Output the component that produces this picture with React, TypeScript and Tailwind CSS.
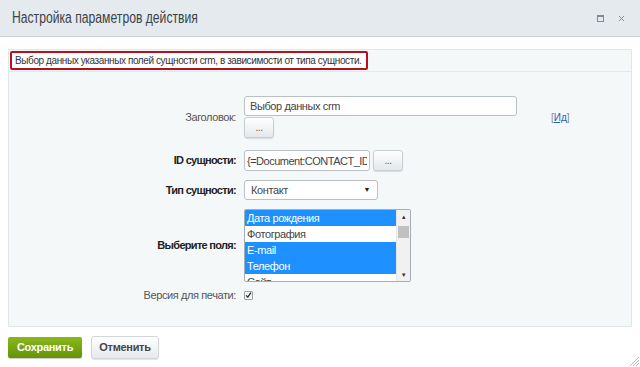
import { X } from "lucide-react"

function DotsButton() {
  return (
    <button className="h-[21px] w-[30px] rounded-[3px] border border-[#c6cdd3] bg-gradient-to-b from-white to-[#e4e8eb] text-[10px] leading-none text-[#555] shadow-[0_1px_1px_rgba(0,0,0,0.12)]">
      ...
    </button>
  )
}

export default function App() {
  const fields = [
    { name: "Дата рождения", selected: true },
    { name: "Фотография", selected: false },
    { name: "E-mail", selected: true },
    { name: "Телефон", selected: true },
    { name: "Сайт", selected: false },
  ]

  return (
    <div className="relative h-[367px] w-[640px] overflow-hidden bg-white font-['Liberation_Sans',Arial,sans-serif] text-[#333]">
      {/* Title bar */}
      <div className="flex h-[37px] items-center justify-between border-b border-[#c9d0d4] bg-[#e4eaed] pl-[12px] pr-[14px]">
        <h1 className="inline-block origin-left scale-x-[0.76] whitespace-nowrap text-[16px] font-normal text-[#3c4349]">
          Настройка параметров действия
        </h1>
        <div className="flex items-center gap-[13px] text-[#7f8a92]">
          <span className="block h-[7px] w-[7px] border border-[#7f8a92] border-t-2"></span>
          <X className="h-[9px] w-[9px]" strokeWidth={2.5} />
        </div>
      </div>

      {/* Body */}
      <div className="px-[8px] pt-[12px]">
        <div className="h-[278px] border border-[#e0e6e9] bg-[#f5f8f9]">
          <div className="flex h-[22px] items-center border-b border-[#e3e8eb] px-[1px]">
            <div className="flex h-[19px] items-center whitespace-nowrap rounded-[2px] border-2 border-[#b3121c] bg-white pl-[3px] pr-[5px] text-[10px] tracking-[-0.4px] text-[#333]">
              Выбор данных указанных полей сущности crm, в зависимости от типа сущности.
            </div>
          </div>

          <div className="flex flex-col pt-[24px] text-[11px] tracking-[-0.4px]">
            {/* Заголовок */}
            <div className="flex items-center">
              <div className="w-[235px] pr-[8px] text-right text-[#555]">Заголовок:</div>
              <div className="flex flex-col gap-[1px]">
                <input
                  readOnly
                  value="Выбор данных crm"
                  className="h-[20px] w-[273px] rounded-[3px] border border-[#b9c0c6] bg-white px-[5px] text-[11px] tracking-[-0.4px] text-[#444] outline-none"
                />
                <DotsButton />
              </div>
              <a className="ml-[34px] text-[10px] tracking-normal text-[#2067b0]">
                <span className="text-[#888]">[</span>
                <span className="underline">Ид</span>
                <span className="text-[#888]">]</span>
              </a>
            </div>

            {/* ID сущности */}
            <div className="mt-[12px] flex items-center">
              <div className="w-[235px] pr-[8px] text-right font-bold tracking-[-0.7px] text-[#222]">ID сущности:</div>
              <input
                readOnly
                value="{=Document:CONTACT_ID}"
                className="h-[21px] w-[126px] rounded-[3px] border border-[#b9c0c6] bg-white px-[2px] text-[11px] tracking-[-0.5px] text-[#444] outline-none"
              />
              <div className="ml-[3px]">
                <DotsButton />
              </div>
            </div>

            {/* Тип сущности */}
            <div className="mt-[9px] flex items-center">
              <div className="w-[235px] pr-[8px] text-right font-bold tracking-[-0.7px] text-[#222]">Тип сущности:</div>
              <div className="flex h-[20px] w-[134px] items-center justify-between rounded-[3px] border border-[#b9c0c6] bg-white pl-[6px] pr-[7px] text-[11px] text-[#444]">
                <span>Контакт</span>
                <span className="text-[7px] text-[#222]">▼</span>
              </div>
            </div>

            {/* Выберите поля */}
            <div className="mt-[9px] flex items-center">
              <div className="w-[235px] pr-[8px] text-right font-bold tracking-[-0.7px] text-[#222]">Выберите поля:</div>
              <div className="flex h-[73px] w-[167px] overflow-hidden rounded-[2px] border border-[#a6adb3] bg-white">
                <div className="flex-1 overflow-hidden text-[11px]">
                  {fields.map((f) => (
                    <div
                      key={f.name}
                      className={
                        f.selected
                          ? "h-[16px] bg-[#1e90ff] pl-[2px] leading-[16px] text-white"
                          : "h-[16px] pl-[2px] leading-[16px] text-[#444]"
                      }
                    >
                      {f.name}
                    </div>
                  ))}
                </div>
                <div className="flex w-[14px] flex-col items-center border-l border-[#e6e6e6] bg-[#f1f1f1]">
                  <span className="mt-[4px] text-[6px] leading-none text-[#333]">▲</span>
                  <span className="mt-[6px] h-[12px] w-[11px] bg-[#c1c1c1]"></span>
                  <span className="mt-auto mb-[3px] text-[6px] leading-none text-[#333]">▼</span>
                </div>
              </div>
            </div>

            {/* Версия для печати */}
            <div className="mt-[5px] flex items-center">
              <div className="w-[235px] pr-[8px] text-right text-[#555]">Версия для печати:</div>
              <span className="flex h-[9px] w-[9px] items-center justify-center rounded-[1px] border border-[#a0a0a0] bg-[#f4f4f4]">
                <svg viewBox="0 0 10 10" className="h-[8px] w-[8px]">
                  <path d="M1.5 5.5 L4 8 L8.5 1.5" fill="none" stroke="#222" strokeWidth="1.8" />
                </svg>
              </span>
            </div>
          </div>
        </div>

        {/* Buttons */}
        <div className="mt-[9px] flex items-center gap-[9px]">
          <button className="h-[21px] w-[74px] rounded-[2px] bg-gradient-to-b from-[#8ab81a] to-[#64930a] text-[11px] font-bold tracking-[-0.3px] text-white shadow-[0_1px_1px_rgba(0,0,0,0.2)]">
            Сохранить
          </button>
          <button className="h-[23px] w-[68px] rounded-[3px] border border-[#d0d6da] bg-gradient-to-b from-white to-[#e6eaec] text-[11px] font-bold tracking-[-0.3px] text-[#444] shadow-[0_1px_1px_rgba(0,0,0,0.12)]">
            Отменить
          </button>
        </div>
      </div>

      {/* Resize grip */}
      <svg className="absolute bottom-[1px] right-[1px] h-[10px] w-[10px]" viewBox="0 0 10 10">
        <path d="M10 1 L1 10 M10 4 L4 10 M10 7 L7 10" stroke="#bbb" strokeWidth="1" />
      </svg>
    </div>
  )
}
